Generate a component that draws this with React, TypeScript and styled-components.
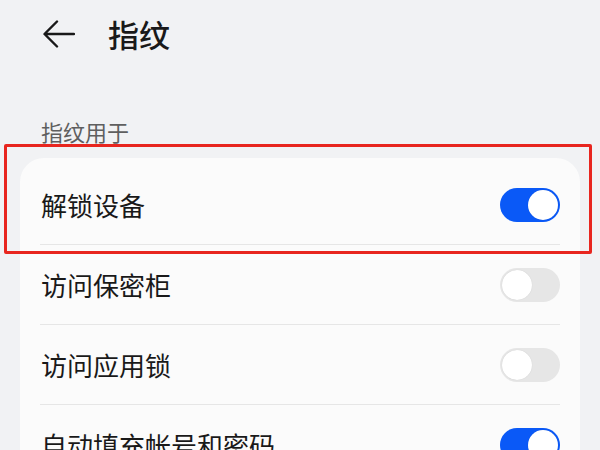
import React from "react";
import styled, { createGlobalStyle } from "styled-components";

const GlobalStyle = createGlobalStyle`
  html, body {
    margin: 0;
    padding: 0;
    background: #f1f2f4;
    overflow: hidden;
  }
  body {
    font-family: "Noto Sans CJK SC", "Noto Sans", sans-serif;
    color: #191919;
  }
`;

const Page = styled.div`
  position: relative;
  width: 600px;
  height: 450px;
  overflow: hidden;
  background: #f1f2f4;
`;

const Header = styled.div`
  display: flex;
  align-items: center;
  height: 68px;
  padding-left: 43px;
  gap: 33px;
`;

const BackButton = styled.button`
  display: flex;
  align-items: center;
  justify-content: center;
  width: 32px;
  height: 28px;
  padding: 0;
  border: none;
  background: none;
  cursor: pointer;
`;

const Title = styled.h1`
  margin: 0;
  font-size: 31px;
  font-weight: 500;
  line-height: 40px;
  color: #191919;
`;

const SectionLabel = styled.div`
  margin: 48px 0 12px 41px;
  font-size: 22px;
  line-height: 30px;
  color: #5f5f5f;
`;

const Card = styled.div`
  margin: 0 20px;
  padding: 7px 20px 0 20px;
  background: #fbfbfb;
  border-radius: 24px;
`;

const Row = styled.div<{ $last?: boolean }>`
  display: flex;
  align-items: center;
  justify-content: space-between;
  height: 80px;
  box-sizing: border-box;
  padding-left: 1px;
  border-bottom: ${(p) => (p.$last ? "none" : "1px solid #e6e6e6")};
`;

const RowText = styled.span`
  font-size: 26px;
  line-height: 34px;
  color: #191919;
`;

const Track = styled.div<{ $on: boolean }>`
  display: flex;
  align-items: center;
  justify-content: ${(p) => (p.$on ? "flex-end" : "flex-start")};
  width: 60px;
  height: 34px;
  padding: 2px;
  box-sizing: border-box;
  border-radius: 17px;
  background: ${(p) => (p.$on ? "#0a59f7" : "#e6e6e6")};
`;

const Knob = styled.div`
  width: 30px;
  height: 30px;
  border-radius: 50%;
  background: #ffffff;
  box-shadow: 0 0 1px rgba(0, 0, 0, 0.15);
`;

const Highlight = styled.div`
  position: absolute;
  left: 4px;
  top: 144px;
  width: 588px;
  height: 110px;
  box-sizing: border-box;
  border: 3px solid #e8261f;
  border-radius: 2px;
  pointer-events: none;
`;

const Toggle: React.FC<{ on: boolean }> = ({ on }) => (
  <Track $on={on}>
    <Knob />
  </Track>
);

const items = [
  { label: "解锁设备", on: true },
  { label: "访问保密柜", on: false },
  { label: "访问应用锁", on: false },
  { label: "自动填充帐号和密码", on: true },
];

const App: React.FC = () => {
  return (
    <Page>
      <GlobalStyle />
      <Header>
        <BackButton aria-label="返回">
          <svg width="32" height="28" viewBox="0 0 32 28" fill="none">
            <path
              d="M31 14H2M14 1.5L1.5 14L14 26.5"
              stroke="#191919"
              strokeWidth="2.4"
              strokeLinecap="round"
              strokeLinejoin="round"
            />
          </svg>
        </BackButton>
        <Title>指纹</Title>
      </Header>
      <SectionLabel>指纹用于</SectionLabel>
      <Card>
        {items.map((item, i) => (
          <Row key={item.label} $last={i === items.length - 1}>
            <RowText>{item.label}</RowText>
            <Toggle on={item.on} />
          </Row>
        ))}
      </Card>
      <Highlight />
    </Page>
  );
};

export default App;
